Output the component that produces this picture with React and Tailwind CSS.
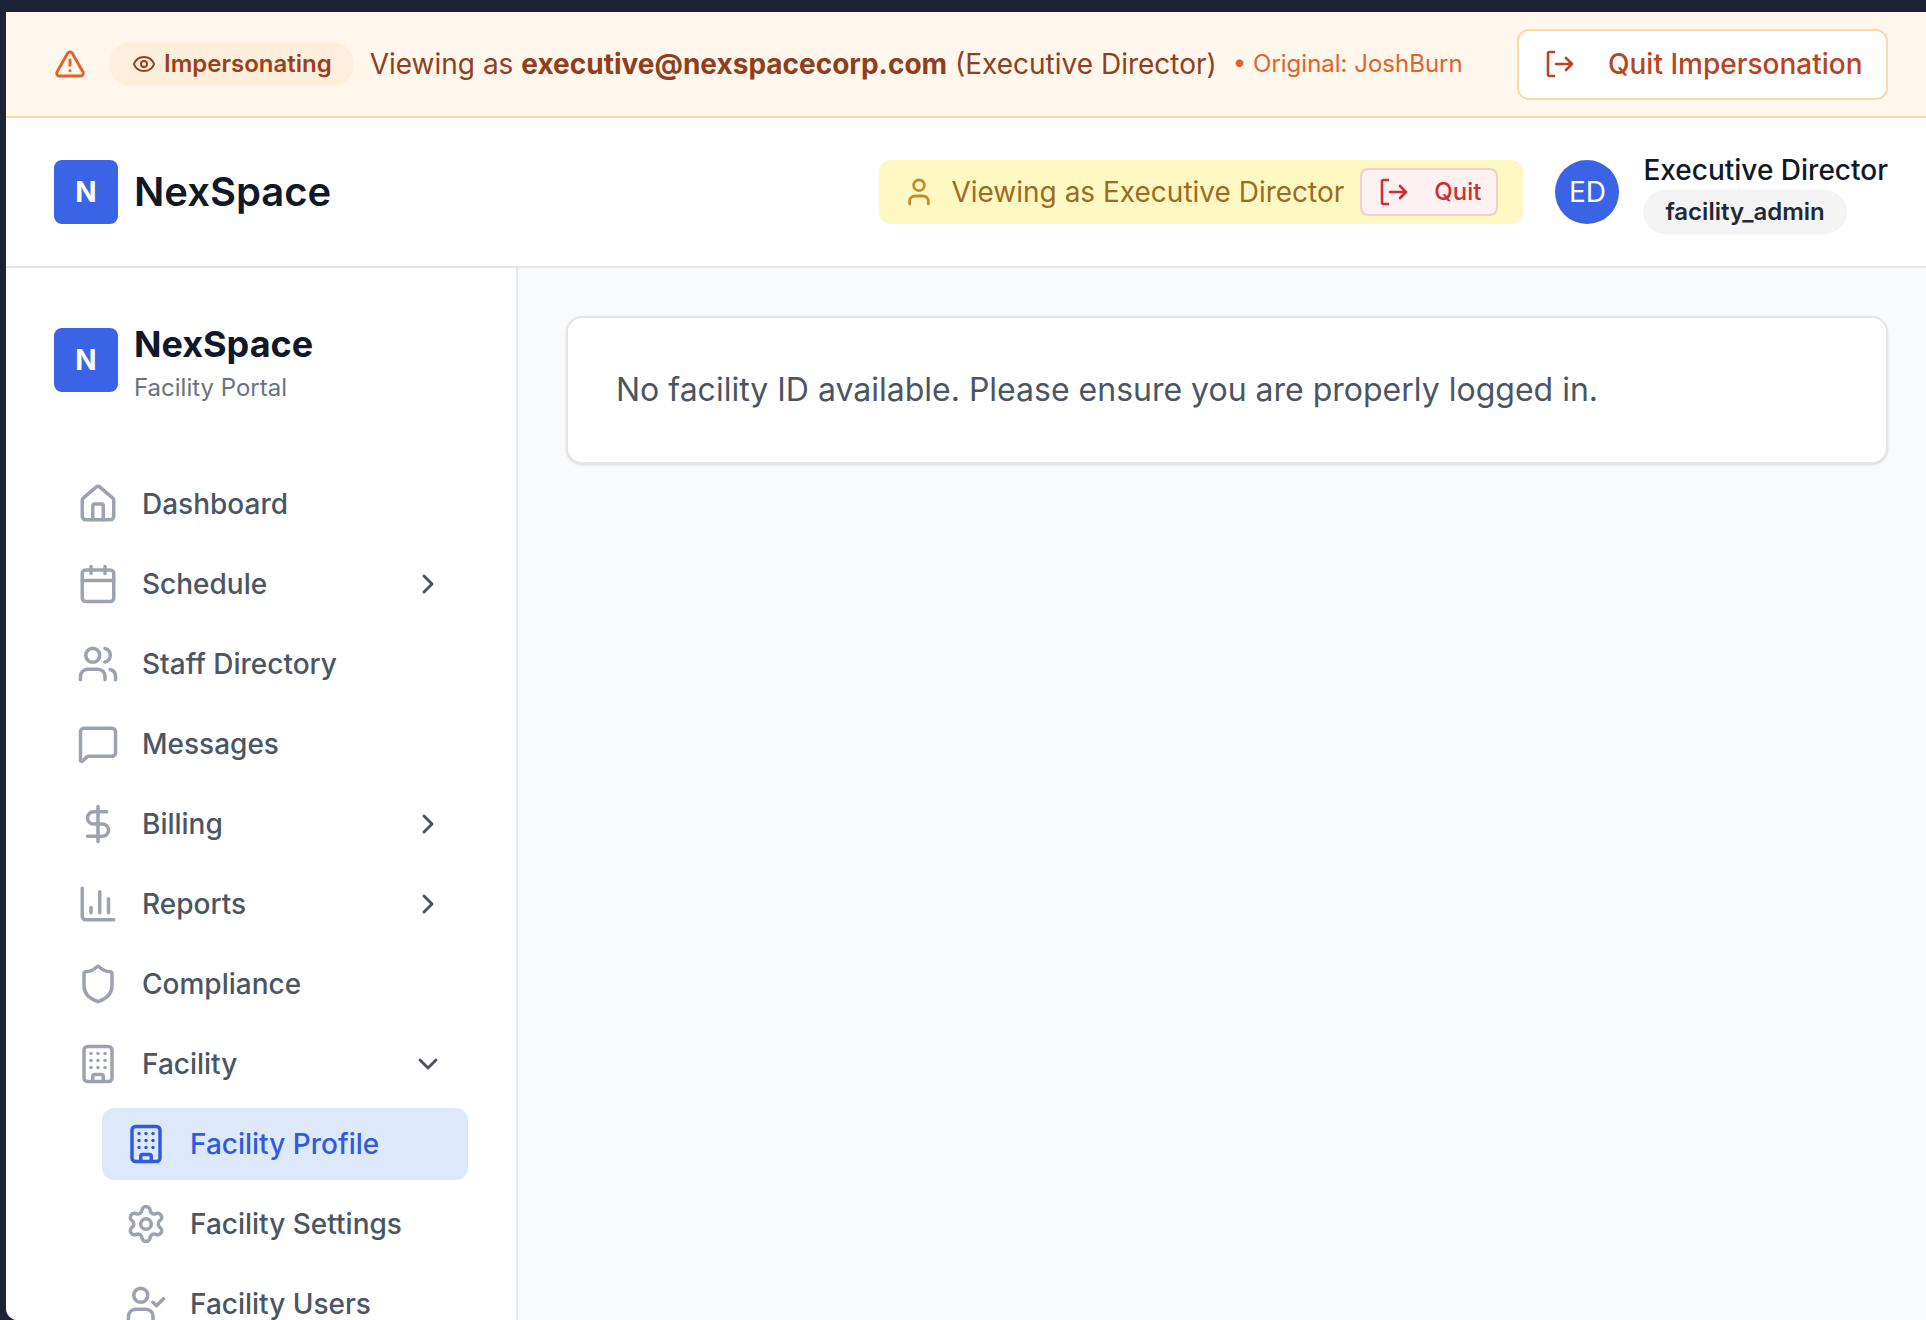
import { ChevronDown, ChevronRight, Eye, TriangleAlert, House, Calendar, Users, MessageSquare, DollarSign, ChartColumn, Shield, Building, Settings, UserCheck, User } from 'lucide-react'

function QuitIcon({ className }) {
  return (
    <svg viewBox="0 0 28 28" fill="none" stroke="currentColor" strokeWidth="2.6" strokeLinecap="round" strokeLinejoin="round" className={className}>
      <path d="M8 2H3.5A1.5 1.5 0 0 0 2 3.5v21A1.5 1.5 0 0 0 3.5 26H8" />
      <path d="M10 14h16M20 8l6 6-6 6" />
    </svg>
  )
}

function LogoBox() {
  return (
    <div className="flex h-16 w-16 shrink-0 items-center justify-center rounded-lg bg-[#3b63e6] text-[28px] font-bold text-white">N</div>
  )
}

const navItems = [
  { label: 'Dashboard', Icon: House },
  { label: 'Schedule', Icon: Calendar, chevron: 'right' },
  { label: 'Staff Directory', Icon: Users },
  { label: 'Messages', Icon: MessageSquare },
  { label: 'Billing', Icon: DollarSign, chevron: 'right' },
  { label: 'Reports', Icon: ChartColumn, chevron: 'right' },
  { label: 'Compliance', Icon: Shield },
  { label: 'Facility', Icon: Building, chevron: 'down' },
]

const subItems = [
  { label: 'Facility Profile', Icon: Building, active: true },
  { label: 'Facility Settings', Icon: Settings },
  { label: 'Facility Users', Icon: UserCheck },
]

function NavRow({ label, Icon, chevron }) {
  return (
    <div className="flex h-[72px] items-center pl-[15px] pr-[24px] text-[#4b5563]">
      <Icon className="h-[42px] w-[42px] shrink-0 text-[#9ca3af]" strokeWidth={2} />
      <span className="ml-[23px] flex-1 text-[28px] font-medium">{label}</span>
      {chevron === 'right' && <ChevronRight className="h-8 w-8 text-[#4b5563]" strokeWidth={2.2} />}
      {chevron === 'down' && <ChevronDown className="h-8 w-8 text-[#4b5563]" strokeWidth={2.2} />}
    </div>
  )
}

function SubRow({ label, Icon, active }) {
  return (
    <div className={`flex h-[72px] items-center rounded-xl pl-[23px] ${active ? 'bg-[#dde8fb] text-[#2f5bdc]' : 'text-[#4b5563]'}`}>
      <Icon className={`h-[42px] w-[42px] shrink-0 ${active ? 'text-[#2f5bdc]' : 'text-[#9ca3af]'}`} strokeWidth={2} />
      <span className="ml-[23px] text-[28px] font-medium">{label}</span>
    </div>
  )
}

export default function App() {
  return (
    <div className="h-[1320px] overflow-hidden bg-[#1c2335] pt-3 font-['Inter',sans-serif]">
      <div className="ml-[6px] flex h-[1308px] flex-col overflow-hidden rounded-bl-xl bg-[#f9fafb]">
        {/* impersonation banner */}
        <div className="flex h-[106px] shrink-0 items-center border-b-2 border-[#fbd9ad] bg-[#fff6ec] pl-[48px] pr-[38px]">
          <TriangleAlert className="h-8 w-8 shrink-0 text-[#e0632a]" strokeWidth={2.2} />
          <div className="ml-[23px] flex h-11 items-center rounded-full bg-[#feefdc] pl-[23px] pr-[22px] text-[24px] font-semibold text-[#9a3f1c]">
            <Eye className="mr-[8px] h-6 w-6" strokeWidth={2} />
            Impersonating
          </div>
          <p className="ml-4 text-[28px] text-[#8f3f1e]">
            Viewing as <span className="font-bold">executive@nexspacecorp.com</span> (Executive Director)
          </p>
          <span className="ml-[16px] text-[24px] text-[#e0632a]">• Original: JoshBurn</span>
          <button type="button" className="ml-auto flex h-[71px] w-[371px] items-center rounded-xl border-2 border-[#fbd9ad] bg-white pl-[27px] text-[28px] font-medium text-[#b8451f]">
            <QuitIcon className="h-7 w-7" />
            <span className="ml-[34px]">Quit Impersonation</span>
          </button>
        </div>

        {/* top header */}
        <div className="flex h-[150px] shrink-0 items-center border-b-2 border-[#e5e7eb] bg-white pl-[48px] pr-[38px]">
          <LogoBox />
          <span className="ml-4 text-[40px] font-semibold text-[#111827]">NexSpace</span>
          <div className="ml-auto flex h-16 w-[644px] items-center rounded-xl bg-yellow-100 pl-[24px] text-[28px] text-[#a16a1e]">
            <User className="h-8 w-8 text-[#ca8a2a]" strokeWidth={2.1} />
            <span className="ml-[16px]">Viewing as Executive Director</span>
            <button type="button" className="ml-[16px] flex h-[48px] w-[138px] items-center rounded-lg border-2 border-[#f7cccc] bg-[#fdf1f1] pl-[18px] text-[24px] font-medium text-[#cf2f2f]">
              <QuitIcon className="h-7 w-7" />
              <span className="ml-[26px]">Quit</span>
            </button>
          </div>
          <div className="ml-8 flex h-16 w-16 items-center justify-center rounded-full bg-[#3b63e6] text-[28px] text-white">ED</div>
          <div className="ml-[24px] mt-[3px] flex flex-col items-start">
            <span className="text-[28px] font-medium leading-[34px] text-[#111827]">Executive Director</span>
            <span className="mt-[3px] flex h-11 items-center rounded-full bg-[#f4f4f4] px-[22px] text-[24px] font-semibold text-[#1f2937]">facility_admin</span>
          </div>
        </div>

        <div className="flex min-h-0 flex-1">
          {/* sidebar */}
          <aside className="w-[512px] shrink-0 border-r-2 border-[#e5e7eb] bg-white pl-[48px] pr-[48px] pt-[60px]">
            <div className="flex items-start">
              <LogoBox />
              <div className="ml-4 -mt-[6px]">
                <div className="text-[36px] font-bold leading-[44px] text-[#111827]">NexSpace</div>
                <div className="mt-[7px] text-[24px] leading-[30px] text-[#6b7280]">Facility Portal</div>
              </div>
            </div>
            <nav className="ml-2 mt-[65px] flex flex-col gap-2">
              {navItems.map((item) => (
                <NavRow key={item.label} {...item} />
              ))}
              <div className="ml-10 flex flex-col gap-2">
                {subItems.map((item) => (
                  <SubRow key={item.label} {...item} />
                ))}
              </div>
            </nav>
          </aside>

          {/* main */}
          <main className="min-w-0 flex-1 pl-[48px] pr-[38px] pt-[48px]">
            <div className="flex h-[148px] items-center rounded-2xl border-2 border-[#e7e5e4] bg-white pl-[48px] shadow-sm">
              <p className="text-[32px] text-[#4b5563]">No facility ID available. Please ensure you are properly logged in.</p>
            </div>
          </main>
        </div>
      </div>
    </div>
  )
}
